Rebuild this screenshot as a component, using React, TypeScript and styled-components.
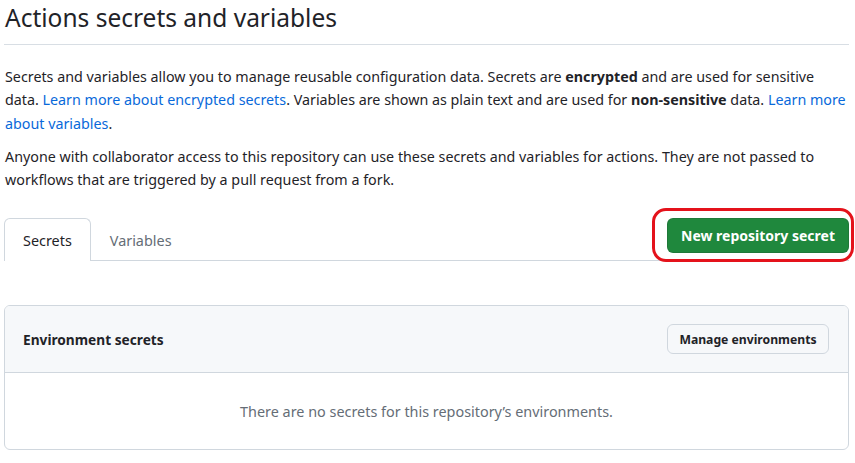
import styled, { createGlobalStyle } from "styled-components";

const GlobalStyle = createGlobalStyle`
  html, body {
    margin: 0;
    padding: 0;
    background: #ffffff;
  }
  body {
    font-family: "Noto Sans", "Open Sans", sans-serif;
    color: #1f2328;
    font-size: 14.4px;
    line-height: 23.3px;
  }
`;

const Page = styled.div`
  width: 845px;
  padding: 0 0 0 4px;
`;

const Header = styled.div`
  border-bottom: 1px solid #d8dee4;
  padding: 0 0 9px 1px;
  margin-bottom: 20px;
`;

const Title = styled.h2`
  margin: 0;
  font-size: 24.5px;
  font-weight: 400;
  line-height: 35px;
`;

const Paragraph = styled.p`
  margin: 0 0 10px 1px;
  font-size: 14.3px;
  white-space: nowrap;
`;

const Link = styled.a`
  color: #0969da;
  text-decoration: none;
`;

const TabBar = styled.div`
  display: flex;
  align-items: flex-end;
  justify-content: space-between;
  margin-top: 27px;
  position: relative;
`;

const Tabs = styled.div`
  display: flex;
  flex: 1;
  border-bottom: 1px solid #d0d7de;
  height: 42px;
  margin-right: -182px;
`;

const Tab = styled.div<{ $active?: boolean }>`
  padding: 0 18px;
  display: flex;
  align-items: center;
  font-size: 14.4px;
  color: ${(p) => (p.$active ? "#1f2328" : "#656d76")};
  background: ${(p) => (p.$active ? "#ffffff" : "transparent")};
  border: 1px solid ${(p) => (p.$active ? "#d0d7de" : "transparent")};
  border-bottom: none;
  border-radius: 6px 6px 0 0;
  margin-bottom: -1px;
  height: 43px;
  box-sizing: border-box;
`;

const ButtonWrap = styled.div`
  position: relative;
  align-self: flex-start;
  z-index: 1;
`;

const PrimaryButton = styled.button`
  font-family: inherit;
  width: 182px;
  height: 35px;
  background: #1f883d;
  color: #ffffff;
  border: 1px solid rgba(31, 35, 40, 0.15);
  border-radius: 6px;
  font-size: 14px;
  font-weight: 700;
  cursor: pointer;
  padding: 0;
`;

const Annotation = styled.div`
  position: absolute;
  left: -15px;
  top: -10px;
  width: 202px;
  height: 54px;
  border: 3px solid #e4121b;
  border-radius: 14px;
  box-sizing: border-box;
  pointer-events: none;
`;

const Box = styled.div`
  margin-top: 44px;
  border: 1px solid #d0d7de;
  border-radius: 6px;
  overflow: hidden;
`;

const BoxHeader = styled.div`
  display: flex;
  align-items: center;
  justify-content: space-between;
  background: #f6f8fa;
  border-bottom: 1px solid #d0d7de;
  height: 66px;
  padding: 0 19px 0 18px;
`;

const BoxTitle = styled.div`
  font-weight: 700;
  font-size: 13.7px;
`;

const SecondaryButton = styled.button`
  font-family: inherit;
  height: 30px;
  width: 162px;
  background: #f6f8fa;
  color: #1f2328;
  border: 1px solid #d0d7de;
  border-radius: 6px;
  font-size: 12.2px;
  font-weight: 700;
  padding: 0;
  cursor: pointer;
`;

const BoxBody = styled.div`
  height: 76px;
  display: flex;
  align-items: center;
  justify-content: center;
  color: #656d76;
  font-size: 14.4px;
`;

export default function App() {
  return (
    <Page>
      <GlobalStyle />
      <Header>
        <Title>Actions secrets and variables</Title>
      </Header>
      <Paragraph>
        Secrets and variables allow you to manage reusable configuration data. Secrets are{" "}
        <b>encrypted</b> and are used for sensitive
        <br />
        data. <Link href="#">Learn more about encrypted secrets</Link>. Variables are shown as
        plain text and are used for <b>non-sensitive</b> data. <Link href="#">Learn more</Link>
        <br />
        <Link href="#">about variables</Link>.
      </Paragraph>
      <Paragraph>
        Anyone with collaborator access to this repository can use these secrets and variables for
        actions. They are not passed to
        <br />
        workflows that are triggered by a pull request from a fork.
      </Paragraph>
      <TabBar>
        <Tabs>
          <Tab $active>Secrets</Tab>
          <Tab>Variables</Tab>
        </Tabs>
        <ButtonWrap>
          <PrimaryButton>New repository secret</PrimaryButton>
          <Annotation />
        </ButtonWrap>
      </TabBar>
      <Box>
        <BoxHeader>
          <BoxTitle>Environment secrets</BoxTitle>
          <SecondaryButton>Manage environments</SecondaryButton>
        </BoxHeader>
        <BoxBody>There are no secrets for this repository’s environments.</BoxBody>
      </Box>
    </Page>
  );
}
